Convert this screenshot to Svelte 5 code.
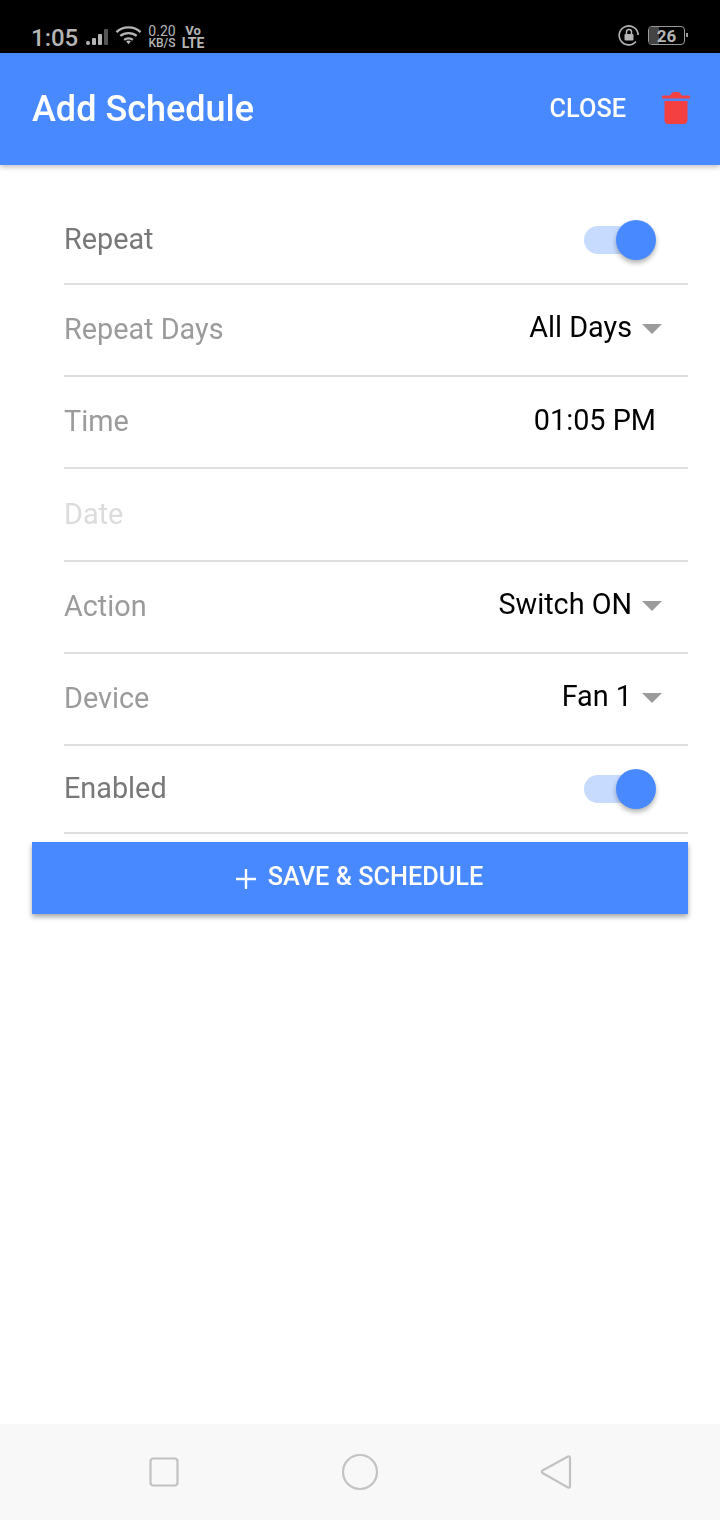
<script>
  const rows = [
    { label: 'Repeat', tone: 'dark', kind: 'toggle', h: 92, kindClass: 'first' },
    { label: 'Repeat Days', tone: 'mid', kind: 'select', value: 'All Days', h: 92 },
    { label: 'Time', tone: 'mid', kind: 'text', value: '01:05 PM', h: 92 },
    { label: 'Date', tone: 'light', kind: 'none', h: 93 },
    { label: 'Action', tone: 'mid', kind: 'select', value: 'Switch ON', h: 92 },
    { label: 'Device', tone: 'mid', kind: 'select', value: 'Fan 1', h: 92 },
    { label: 'Enabled', tone: 'dark', kind: 'toggle', h: 88, kindClass: 'last' }
  ];
</script>

<div class="screen">
  <div class="status">
    <div class="status-left">
      <span class="clock">1:05</span>
      <svg class="signal" width="22" height="17" viewBox="0 0 22 17">
        <rect x="0" y="12" width="4" height="4" rx="2" fill="#b5b5b5" />
        <rect x="6" y="9" width="4" height="7" rx="1" fill="#b5b5b5" />
        <rect x="12" y="5" width="4" height="11" rx="1" fill="#b5b5b5" />
        <rect x="18" y="0" width="4" height="16" rx="1" fill="#555" />
      </svg>
      <svg class="wifi" width="27" height="20" viewBox="0 0 28 20" fill="none" stroke="#b5b5b5" stroke-width="2.4">
        <path d="M1.500 7 C8.500 0.500 19.500 0.500 26.500 7" />
        <path d="M5.500 11 C10 7 18 7 22.500 11" />
        <path d="M9.500 15 C12 13 16 13 18.500 15" />
        <path d="M11.500 16.500 L14 19.500 L16.500 16.500 C15 15.500 13 15.500 11.500 16.500 Z" fill="#b5b5b5" stroke="none" />
      </svg>
      <div class="speed"><span>0.20</span><span class="unit">KB/S</span></div>
      <div class="volte"><span class="vo">Vo</span><span>LTE</span></div>
    </div>
    <div class="status-right">
      <svg class="lock" width="22" height="22" viewBox="0 0 22 22" fill="none">
        <path d="M18 17.500 A9.500 9.500 0 1 1 20.200 11" stroke="#b5b5b5" stroke-width="1.600" />
        <rect x="6.500" y="10" width="9" height="6.500" rx="1" fill="#b5b5b5" />
        <path d="M8.500 10 V8 a2.500 2.500 0 0 1 5 0 V10" stroke="#b5b5b5" stroke-width="1.500" />
      </svg>
      <div class="battery"><div class="charge"></div><span>26</span></div>
      <div class="nub"></div>
    </div>
  </div>

  <header class="appbar">
    <h1>Add Schedule</h1>
    <div class="actions">
      <span class="close">CLOSE</span>
      <svg class="trash" width="30" height="36" viewBox="0 0 30 36">
        <path d="M1 8 C1 7 1.500 6.500 2.500 6.500 H9.500 C10 3.500 12 3 15 3 C18 3 20 3.500 20.500 6.500 H27.500 C28.500 6.500 29 7 29 8 V9.500 H1 Z" fill="#f44040" />
        <path d="M3.500 12 H26.500 V31 C26.500 33.500 25 35 22.500 35 H7.500 C5 35 3.500 33.500 3.500 31 Z" fill="#f44040" />
      </svg>
    </div>
  </header>

  <main class="form">
    {#each rows as row}
      <div class="row {row.kindClass ?? ''}" style:height="{row.h}px">
        <span class="label {row.tone}">{row.label}</span>
        {#if row.kind === 'toggle'}
          <div class="toggle"><div class="track"></div><div class="thumb"></div></div>
        {:else if row.kind === 'select'}
          <div class="select"><span>{row.value}</span><i class="caret"></i></div>
        {:else if row.kind === 'text'}
          <span class="time">{row.value}</span>
        {/if}
      </div>
    {/each}
    <button class="save">
      <svg width="22" height="22" viewBox="0 0 22 22" stroke="#fff" stroke-width="2.400"><path d="M11 1 V21 M1 11 H21" /></svg>
      <span>SAVE &amp; SCHEDULE</span>
    </button>
  </main>

  <nav class="softkeys">
    <svg width="32" height="32" viewBox="0 0 32 32" fill="none" stroke="#c2c2c2" stroke-width="2.200"><rect x="2.500" y="2.500" width="27" height="27" rx="3" /></svg>
    <svg width="38" height="38" viewBox="0 0 38 38" fill="none" stroke="#c2c2c2" stroke-width="2.200"><circle cx="19" cy="19" r="17" /></svg>
    <svg width="32" height="36" viewBox="0 0 32 36" fill="none" stroke="#c2c2c2" stroke-width="2.200" stroke-linejoin="round"><path d="M2.500 16.500 L28 2.500 C29.500 2 30 2.500 30 4 V32 C30 33.500 29.500 34 28 33.500 L2.500 19 C1.500 18 1.500 17.500 2.500 16.500 Z" /></svg>
  </nav>
</div>

<style>
  :global(body) { margin: 0; background: #fff; }
  .screen {
    width: 720px;
    height: 1520px;
    display: flex;
    flex-direction: column;
    font-family: Roboto, "Liberation Sans", sans-serif;
    overflow: hidden;
  }
  .status {
    height: 53px;
    flex: none;
    background: #000;
    color: #b5b5b5;
    display: flex;
    justify-content: space-between;
    align-items: flex-end;
    padding: 0 35px 1px 31px;
    box-sizing: border-box;
  }
  .status-left { display: flex; align-items: center; height: 30px; }
  .clock { font-size: 24px; font-weight: 500; width: 55px; margin-top: 2px; }
  .signal { margin-right: 7px; }
  .wifi { margin-right: 6px; margin-top: -4px; }
  .speed, .volte { display: flex; flex-direction: column; }
  .speed { line-height: 12px; font-size: 14px; align-items: center; width: 28px; margin-right: 5px; }
  .speed .unit { font-size: 12px; font-weight: 500; }
  .volte { font-size: 14px; line-height: 13px; font-weight: 700; align-items: center; width: 24px; }
  .vo { font-size: 13px; }
  .status-right { display: flex; align-items: center; height: 26px; margin-bottom: 4px; }
  .lock { margin-right: 8px; }
  .battery {
    position: relative;
    width: 37px;
    height: 19px;
    border: 1px solid #999;
    border-radius: 4px;
    box-sizing: border-box;
    font-size: 17px;
    font-weight: 700;
    line-height: 19px;
    text-align: center;
    overflow: hidden;
  }
  .battery span { position: relative; }
  .charge { position: absolute; left: 0; top: 0; bottom: 0; width: 10px; background: #444; }
  .nub { width: 2px; height: 4px; background: #999; margin-left: 1px; margin-right: -3px; }

  .appbar {
    height: 112px;
    flex: none;
    background: #4889ff;
    color: #fff;
    display: flex;
    align-items: center;
    justify-content: space-between;
    padding: 0 29px 0 32px;
    box-sizing: border-box;
    box-shadow: 0 2px 5px rgba(0, 0, 0, 0.25);
    position: relative;
    z-index: 1;
  }
  h1 { margin: 0; font-size: 36px; font-weight: 500; }
  .actions { display: flex; align-items: center; gap: 35px; }
  .close { font-size: 25.300px; font-weight: 500; margin-top: -2px; }
  .trash { margin-top: -5px; }

  .form {
    flex: 1;
    padding: 28px 32px 0;
    display: flex;
    flex-direction: column;
    will-change: transform;
  }
  .row {
    margin-left: 32px;
    flex: none;
    box-sizing: border-box;
    border-bottom: 2px solid #dedede;
    display: flex;
    align-items: center;
    justify-content: space-between;
    padding: 0 32px 2px 0;
  }
  .first { padding-bottom: 0; padding-top: 2px; }
  .first .toggle { margin-top: 2px; }
  .last { padding-bottom: 2px; }
  .label { font-size: 28.800px; }
  .dark { color: #787878; }
  .mid { color: #9b9b9b; }
  .light { color: #dcdcdc; }
  .select, .time { color: #000; font-size: 28.800px; }
  .select { display: flex; align-items: center; gap: 10px; margin-right: -6px; margin-top: -4px; }
  .select .caret { margin-top: 4px; }
  .time { margin-top: -2px; }
  .caret {
    width: 0;
    height: 0;
    border-left: 10px solid transparent;
    border-right: 10px solid transparent;
    border-top: 10px solid #9b9b9b;
  }
  .toggle { position: relative; width: 72px; height: 40px; }
  .track { position: absolute; left: 0; top: 6px; width: 56px; height: 28px; border-radius: 14px; background: #c7dbff; }
  .thumb {
    position: absolute;
    right: 0;
    top: 0;
    width: 40px;
    height: 40px;
    border-radius: 50%;
    background: #4889ff;
    box-shadow: 0 3px 5px rgba(0, 0, 0, 0.3);
  }
  .last .toggle { margin-top: 2px; }
  .save {
    margin-top: 8px;
    height: 72px;
    border: 0;
    padding: 0 2px 4px 0;
    background: #4889ff;
    color: #fff;
    display: flex;
    align-items: center;
    justify-content: center;
    gap: 11px;
    font-family: inherit;
    font-size: 25.300px;
    font-weight: 500;
    box-shadow: 0 3px 5px rgba(0, 0, 0, 0.35);
  }
  .save svg { margin-top: 6px; }
  .softkeys {
    height: 96px;
    flex: none;
    background: #f8f8f8;
    display: flex;
    align-items: center;
    justify-content: center;
    gap: 161px;
  }
</style>
